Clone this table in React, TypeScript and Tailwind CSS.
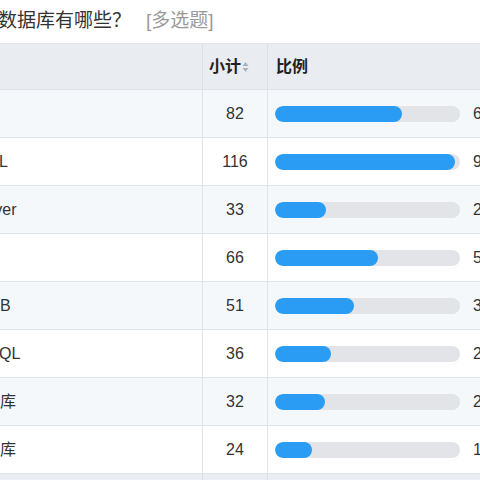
import React from "react";

const rows = [
  { label: "", off: "", n: 82, pct: "64.06%" },
  { label: "L", off: "-ml-[1px]", n: 116, pct: "90.63%" },
  { label: "rver", off: "-ml-[11px]", n: 33, pct: "25.78%" },
  { label: "", off: "", n: 66, pct: "51.56%" },
  { label: "B", off: "", n: 51, pct: "39.84%" },
  { label: "QL", off: "-ml-[1px]", n: 36, pct: "28.13%" },
  { label: "库", off: "", n: 32, pct: "25%" },
  { label: "库", off: "", n: 24, pct: "18.75%" },
];

const maxBar = 119;

export default function App() {
  return (
    <div
      className="w-[480px] h-[480px] overflow-hidden bg-white text-[#333]"
      style={{ fontFamily: '"Liberation Sans", "Noto Sans CJK SC", sans-serif' }}
    >
      <div className="h-[43px] flex items-center whitespace-nowrap -ml-[2px] pb-[1px]">
        <span className="text-[19px] text-[#333]">数据库有哪些？</span>
        <span className="text-[19px] text-[#9a9a9a] ml-[15px]">[多选题]</span>
      </div>
      <div className="border-t border-[#e2e5e9]">
        <div className="grid grid-cols-[203px_65px_1fr] h-[46px] bg-[#e9ecf0] border-b border-[#dfe2e6]">
          <div className="border-r border-[#dcdfe3]" />
          <div className="border-r border-[#dcdfe3] flex items-center pl-[6px] font-bold text-[16px] text-[#222]">
            小计
            <svg width="7" height="12" viewBox="0 0 7 12" className="ml-[1px] mt-[1px]">
              <path d="M3.5 1 L6.5 5 L0.5 5 Z" fill="#aab0b8" />
              <path d="M3.5 11 L6.5 7 L0.5 7 Z" fill="#aab0b8" />
            </svg>
          </div>
          <div className="flex items-center pl-[8px] font-bold text-[16px] text-[#222]">比例</div>
        </div>
        {rows.map((r, i) => (
          <div
            key={i}
            className={`grid grid-cols-[203px_65px_1fr] h-[48px] border-b border-[#e0e3e7] ${
              i % 2 === 0 ? "bg-[#f5f8fb]" : "bg-white"
            }`}
          >
            <div className="border-r border-[#e0e3e7] flex items-center text-[16px] whitespace-nowrap overflow-hidden">
              <span className={r.off}>{r.label}</span>
            </div>
            <div className="border-r border-[#e0e3e7] flex items-center justify-center text-[16px]">
              {r.n}
            </div>
            <div className="flex items-center pl-[7px] whitespace-nowrap">
              <div className="w-[185px] h-[16px] rounded-full bg-[#e3e4e7] overflow-hidden shrink-0">
                <div
                  className="h-full rounded-full bg-[#2a9cf4]"
                  style={{ width: `${(r.n / maxBar) * 100}%` }}
                />
              </div>
              <span className="ml-[13px] text-[16px]">{r.pct}</span>
            </div>
          </div>
        ))}
        <div className="h-[48px] bg-[#e9ecf0] grid grid-cols-[203px_65px_1fr]">
          <div className="border-r border-[#dcdfe3]" />
          <div className="border-r border-[#dcdfe3]" />
          <div />
        </div>
      </div>
    </div>
  );
}
